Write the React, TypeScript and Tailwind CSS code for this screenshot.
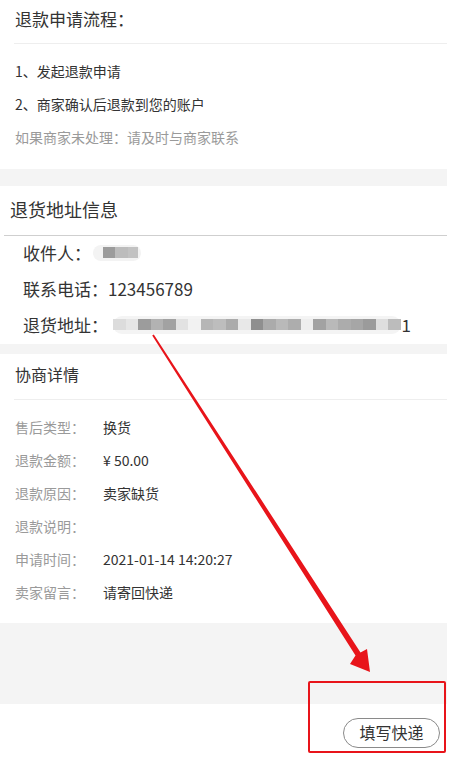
import React from "react";

const steps = ["1、发起退款申请", "2、商家确认后退款到您的账户"];

const details = [
	{ label: "售后类型：", value: "换货" },
	{ label: "退款金额：", value: "¥ 50.00" },
	{ label: "退款原因：", value: "卖家缺货" },
	{ label: "退款说明：", value: "" },
	{ label: "申请时间：", value: "2021-01-14 14:20:27" },
	{ label: "卖家留言：", value: "请寄回快递" },
];

// mosaic blur blocks over the address
const addrBlocks = [
	"bg-[#dcdcdc]",
	"bg-[#e6e6e6]",
	"bg-[#9c9c9c]",
	"bg-[#b2b2b2]",
	"bg-[#a2a2a2]",
	"bg-[#e2e2e2]",
	"bg-[#f2f2f2]",
	"bg-[#b6b6b6]",
	"bg-[#bdbdbd]",
	"bg-[#ababab]",
	"bg-[#e8e8e8]",
	"bg-[#8f8f8f]",
	"bg-[#ababab]",
	"bg-[#b9b9b9]",
	"bg-[#adadad]",
	"bg-[#eeeeee]",
	"bg-[#a2a2a2]",
	"bg-[#b9b9b9]",
	"bg-[#acacac]",
	"bg-[#a6a6a6]",
	"bg-[#9b9b9b]",
	"bg-[#dedede]",
	"bg-[#bcbcbc]",
];

export default function App() {
	return (
		<div className="relative w-[452px] h-[764px] bg-white overflow-hidden font-['Noto_Sans_CJK_SC','Noto_Sans',sans-serif] text-[#333]">
			<div className="w-[447px]">
				{/* 退款申请流程 */}
				<div className="h-[43px] flex items-center pl-[15px] pb-[5px] text-[17px]">
					退款申请流程：
				</div>
				<div className="ml-[14px] h-px bg-[#eeeeee]" />
				<div className="pt-[11px] pb-[15px] pl-[15px] text-[14px]">
					{steps.map((s) => (
						<div key={s} className="h-[33px] flex items-center">
							{s}
						</div>
					))}
					<div className="h-[33px] flex items-center text-[#9a9a9a]">
						如果商家未处理：请及时与商家联系
					</div>
				</div>
				<div className="h-[17px] bg-[#f4f4f4]" />

				{/* 退货地址信息 */}
				<div className="h-[49px] flex items-center pl-[10px] text-[18px] pb-[2px]">
					退货地址信息
				</div>
				<div className="ml-[4px] h-px bg-[#cfcfcf]" />
				<div className="pl-[23px] text-[17px]">
					<div className="h-[36px] flex items-center pb-[3px]">
						<span>收件人：</span>
						<span className="ml-[2px] flex items-center h-[16px] w-[48px] rounded-full bg-[#f3f3f3]">
							<span className="ml-[10px] w-[12px] h-[11px] bg-[#9c9c9c]" />
							<span className="w-[13px] h-[11px] bg-[#bcbcbc]" />
							<span className="w-[10px] h-[11px] bg-[#c2c2c2]" />
						</span>
					</div>
					<div className="h-[36px] flex items-center pb-[3px]">联系电话：123456789</div>
					<div className="h-[36px] flex items-center pb-[3px]">
						<span>退货地址：</span>
						<span className="ml-[5px] flex items-center h-[18px] rounded-full bg-[#f4f4f4]">
							{addrBlocks.map((c, i) => (
								<span key={i} className={`w-[12.5px] h-[11px] ${c}`} />
							))}
						</span>
						<span className="ml-[1px]">1</span>
					</div>
				</div>
				<div className="h-[10px] bg-[#f4f4f4]" />

				{/* 协商详情 */}
				<div className="h-[45px] flex items-center pl-[15px] pb-[6px] text-[16px]">
					协商详情
				</div>
				<div className="ml-[14px] h-px bg-[#eeeeee]" />
				<div className="pt-[11px] pb-[14px] pl-[15px] text-[14px]">
					{details.map((d) => (
						<div key={d.label} className="h-[33px] flex items-center">
							<span className="w-[88px] text-[#9a9a9a]">{d.label}</span>
							<span>{d.value}</span>
						</div>
					))}
				</div>
				<div className="h-[81px] bg-[#f4f4f4]" />

				{/* bottom bar */}
				<div className="h-[62px] flex justify-end items-start pt-[14px] pr-[7px]">
					<button className="w-[97px] h-[30px] rounded-full border-[1.5px] border-[#8a8a8a] text-[16px] text-[#333] flex items-center justify-center pb-[2px]">
						填写快递
					</button>
				</div>
			</div>

			{/* annotation: red box */}
			<div className="absolute left-[308px] top-[681px] w-[138px] h-[72px] border-2 border-[#e8141a] rounded-[2px]" />

			{/* annotation: red arrow */}
			<svg
				className="absolute left-0 top-0 pointer-events-none"
				width="452"
				height="764"
				viewBox="0 0 452 764"
			>
				<polygon
					points="152.2,335.5 355.5,655.6 350,664 370,672 367,649 360.5,652.4 153.8,334.5"
					fill="#e8141a"
				/>
			</svg>
		</div>
	);
}
